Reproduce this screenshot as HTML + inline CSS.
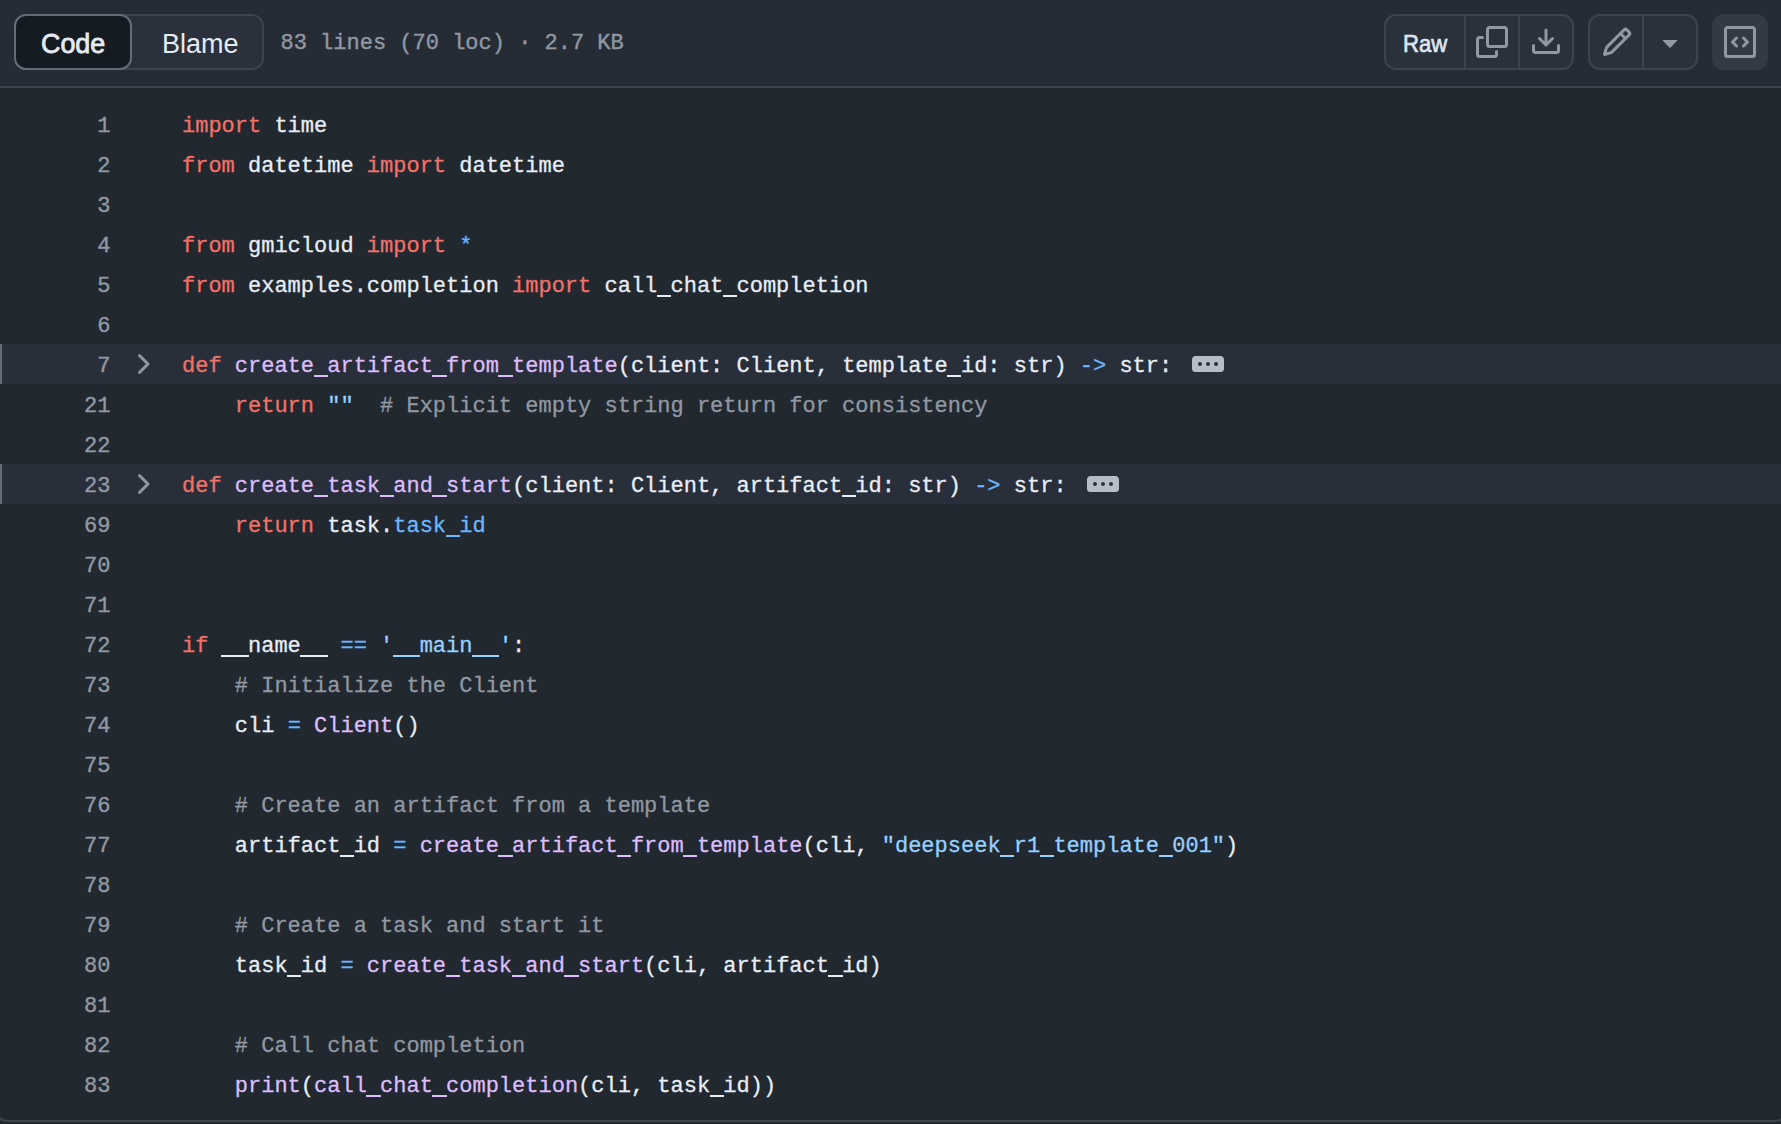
<!DOCTYPE html>
<html lang="en">
<head>
<meta charset="utf-8">
<title>Code view</title>
<style>
*{box-sizing:border-box;margin:0;padding:0}
html,body{width:1781px;height:1124px;overflow:hidden;background:#212830}
body{position:relative;font-family:"Liberation Sans",sans-serif;color:#f0f6fc}
.frame{position:absolute;left:-5px;top:-30px;width:1792px;height:1152px;border:2px solid #3d444d;border-radius:12px;pointer-events:none}
.hdr{position:absolute;left:0;top:0;width:1781px;height:88px;background:#262c36;border-bottom:2px solid #3d444d}
.seg{position:absolute;left:14px;top:14px;width:250px;height:56px;border:2px solid #3d444d;border-radius:12px;background:#2a313c}
.seg .on{position:absolute;left:-2px;top:-2px;width:118px;height:56px;border:2px solid #656c76;border-radius:12px;background:#151b23}
.seg span{position:absolute;top:0px;height:56px;line-height:56px;font-size:28px;color:#e6ebf2;white-space:nowrap;transform-origin:0 50%}
.seg .t1{left:25px;font-weight:normal;-webkit-text-stroke:.8px;transform:scaleX(.96)}
.seg .t2{left:146px;font-size:27px}
.info{position:absolute;left:280.5px;top:24px;-webkit-text-stroke:.4px #9198a1;height:40px;line-height:40px;font-family:"Liberation Mono",monospace;font-size:22px;color:#9198a1;white-space:pre}
.grp{position:absolute;top:14px;height:56px;border:2px solid #3d444d;border-radius:12px;background:#2a313c}
.grp i{position:absolute;top:0;width:2px;height:52px;background:#3d444d}
.grp svg,.sq svg{position:absolute;width:32px;height:32px;fill:#9198a1}
.raw{position:absolute;left:17px;top:-.5px;height:56px;line-height:56px;font-size:24px;font-weight:normal;-webkit-text-stroke:.7px;color:#dfe4ec;transform:scaleX(.92);transform-origin:0 50%}
.sq{position:absolute;left:1712px;top:14px;width:56px;height:56px;border-radius:12px;background:#323a45}
.code{position:absolute;left:0;top:104px;width:1781px;font-family:"Liberation Mono",monospace;font-size:22px}
.r{position:relative;height:40px;line-height:40px;white-space:pre}
.r.h{background:#292f3a;box-shadow:inset 2px 0 0 #656c76}
.n{position:absolute;left:0;top:3px;-webkit-text-stroke:.4px;width:110.5px;text-align:right;color:#9198a1}
.c{position:absolute;left:182px;top:3px;-webkit-text-stroke:.3px;color:#e8edf4}
.k{color:#f47067}.b{color:#6cb6ff}.s{color:#96d0ff}.p{color:#dcbdfb}.m{color:#9198a1}
u{position:relative;text-decoration:none;-webkit-text-fill-color:transparent;-webkit-text-stroke:0}
u::after{content:"";position:absolute;left:-.5px;right:-.5px;top:21px;height:2px;background:currentColor}
.chev{position:absolute;left:126px;top:4px;width:32px;height:32px;fill:#9198a1}
.el{display:inline-block;vertical-align:top;width:32px;height:32px;margin:1px 0 0 20px;fill:#b7bdc8}
</style>
</head>
<body>
<div class="hdr">
  <div class="seg"><div class="on"></div><span class="t1">Code</span><span class="t2">Blame</span></div>
  <div class="info">83 lines (70 loc) · 2.7 KB</div>
  <div class="grp" style="left:1384px;width:190px">
    <span class="raw">Raw</span>
    <i style="left:78px"></i><i style="left:132px"></i>
    <svg style="left:90px;top:10px" viewBox="0 0 16 16"><path d="M0 6.75C0 5.784.784 5 1.75 5h1.5a.75.75 0 0 1 0 1.5h-1.5a.25.25 0 0 0-.25.25v7.5c0 .138.112.25.25.25h7.5a.25.25 0 0 0 .25-.25v-1.5a.75.75 0 0 1 1.5 0v1.5A1.75 1.75 0 0 1 9.25 16h-7.5A1.75 1.75 0 0 1 0 14.25Z"/><path d="M5 1.75C5 .784 5.784 0 6.75 0h7.5C15.216 0 16 .784 16 1.75v7.5A1.75 1.75 0 0 1 14.25 11h-7.5A1.75 1.75 0 0 1 5 9.25Zm1.75-.25a.25.25 0 0 0-.25.25v7.5c0 .138.112.25.25.25h7.5a.25.25 0 0 0 .25-.25v-7.5a.25.25 0 0 0-.25-.25Z"/></svg>
    <svg style="left:144px;top:10px" viewBox="0 0 16 16"><path d="M2.75 14A1.75 1.75 0 0 1 1 12.25v-2.5a.75.75 0 0 1 1.5 0v2.5c0 .138.112.25.25.25h10.5a.25.25 0 0 0 .25-.25v-2.5a.75.75 0 0 1 1.5 0v2.5A1.75 1.75 0 0 1 13.25 14Z"/><path d="M7.25 7.689V2a.75.75 0 0 1 1.5 0v5.689l1.97-1.969a.749.749 0 1 1 1.06 1.06l-3.25 3.25a.749.749 0 0 1-1.06 0L4.22 6.78a.749.749 0 1 1 1.06-1.06l1.97 1.969Z"/></svg>
  </div>
  <div class="grp" style="left:1588px;width:110px">
    <i style="left:52px"></i>
    <svg style="left:11px;top:10px" viewBox="0 0 16 16"><path d="M11.013 1.427a1.75 1.75 0 0 1 2.474 0l1.086 1.086a1.75 1.75 0 0 1 0 2.474l-8.61 8.61c-.21.21-.47.364-.756.445l-3.251.93a.75.75 0 0 1-.927-.928l.929-3.25c.081-.286.235-.547.445-.758l8.61-8.61Zm.176 4.823L9.750 4.810l-6.286 6.287a.253.253 0 0 0-.064.108l-.558 1.953 1.953-.558a.253.253 0 0 0 .108-.064Zm1.238-3.763a.25.25 0 0 0-.354 0L10.811 3.750l1.439 1.440 1.263-1.263a.25.25 0 0 0 0-.354Z"/></svg>
    <svg style="left:64px;top:10px" viewBox="0 0 16 16"><path d="m4.427 7.427 3.396 3.396a.25.25 0 0 0 .354 0l3.396-3.396A.25.25 0 0 0 11.396 7H4.604a.25.25 0 0 0-.177.427Z"/></svg>
  </div>
  <div class="sq"><svg style="left:12px;top:12px" viewBox="0 0 16 16"><path d="M0 1.75C0 .784.784 0 1.750 0h12.500C15.216 0 16 .784 16 1.750v12.500A1.750 1.750 0 0 1 14.250 16H1.750A1.750 1.750 0 0 1 0 14.250Zm1.750-.250a.250.250 0 0 0-.250.250v12.500c0 .138.112.250.250.250h12.500a.250.250 0 0 0 .250-.250V1.750a.250.250 0 0 0-.250-.250Zm7.470 3.970a.750.750 0 0 1 1.060 0l2 2a.750.750 0 0 1 0 1.060l-2 2a.749.749 0 0 1-1.275-.326.749.749 0 0 1 .215-.734L10.690 8 9.220 6.530a.750.750 0 0 1 0-1.060ZM6.780 6.530 5.310 8l1.470 1.470a.749.749 0 0 1-.326 1.275.749.749 0 0 1-.734-.215l-2-2a.750.750 0 0 1 0-1.060l2-2a.751.751 0 0 1 1.042.018.751.751 0 0 1 .018 1.042Z"/></svg></div>
</div>
<div class="code" id="code">
<div class="r"><span class="n">1</span><span class="c"><span class="k">import</span> time</span></div>
<div class="r"><span class="n">2</span><span class="c"><span class="k">from</span> datetime <span class="k">import</span> datetime</span></div>
<div class="r"><span class="n">3</span></div>
<div class="r"><span class="n">4</span><span class="c"><span class="k">from</span> gmicloud <span class="k">import</span> <span class="b">*</span></span></div>
<div class="r"><span class="n">5</span><span class="c"><span class="k">from</span> examples.completion <span class="k">import</span> call<u>_</u>chat<u>_</u>completion</span></div>
<div class="r"><span class="n">6</span></div>
<div class="r h"><span class="n">7</span><svg class="chev" viewBox="0 0 16 16"><path d="M6.22 3.22a.75.75 0 0 1 1.06 0l4.25 4.25a.75.75 0 0 1 0 1.06l-4.25 4.25a.751.751 0 0 1-1.042-.018.751.751 0 0 1-.018-1.042L9.94 8 6.22 4.28a.75.75 0 0 1 0-1.06Z"/></svg><span class="c"><span class="k">def</span> <span class="p">create<u>_</u>artifact<u>_</u>from<u>_</u>template</span>(client: Client, template<u>_</u>id: str) <span class="b">-&gt;</span> str:<svg class="el" viewBox="0 0 16 16"><path d="M0 5.75C0 4.784.784 4 1.75 4h12.5c.966 0 1.75.784 1.75 1.75v4.5A1.75 1.75 0 0 1 14.25 12H1.75A1.75 1.75 0 0 1 0 10.25ZM12 7a1 1 0 1 0 0 2 1 1 0 0 0 0-2ZM7 8a1 1 0 1 0 2 0 1 1 0 0 0-2 0ZM4 7a1 1 0 1 0 0 2 1 1 0 0 0 0-2Z"/></svg></span></div>
<div class="r"><span class="n">21</span><span class="c">    <span class="k">return</span> <span class="s">""</span>  <span class="m"># Explicit empty string return for consistency</span></span></div>
<div class="r"><span class="n">22</span></div>
<div class="r h"><span class="n">23</span><svg class="chev" viewBox="0 0 16 16"><path d="M6.22 3.22a.75.75 0 0 1 1.06 0l4.25 4.25a.75.75 0 0 1 0 1.06l-4.25 4.25a.751.751 0 0 1-1.042-.018.751.751 0 0 1-.018-1.042L9.94 8 6.22 4.28a.75.75 0 0 1 0-1.06Z"/></svg><span class="c"><span class="k">def</span> <span class="p">create<u>_</u>task<u>_</u>and<u>_</u>start</span>(client: Client, artifact<u>_</u>id: str) <span class="b">-&gt;</span> str:<svg class="el" viewBox="0 0 16 16"><path d="M0 5.75C0 4.784.784 4 1.75 4h12.5c.966 0 1.75.784 1.75 1.75v4.5A1.75 1.75 0 0 1 14.25 12H1.75A1.75 1.75 0 0 1 0 10.25ZM12 7a1 1 0 1 0 0 2 1 1 0 0 0 0-2ZM7 8a1 1 0 1 0 2 0 1 1 0 0 0-2 0ZM4 7a1 1 0 1 0 0 2 1 1 0 0 0 0-2Z"/></svg></span></div>
<div class="r"><span class="n">69</span><span class="c">    <span class="k">return</span> task.<span class="b">task<u>_</u>id</span></span></div>
<div class="r"><span class="n">70</span></div>
<div class="r"><span class="n">71</span></div>
<div class="r"><span class="n">72</span><span class="c"><span class="k">if</span> <u>_</u><u>_</u>name<u>_</u><u>_</u> <span class="b">==</span> <span class="s">'<u>_</u><u>_</u>main<u>_</u><u>_</u>'</span>:</span></div>
<div class="r"><span class="n">73</span><span class="c">    <span class="m"># Initialize the Client</span></span></div>
<div class="r"><span class="n">74</span><span class="c">    cli <span class="b">=</span> <span class="p">Client</span>()</span></div>
<div class="r"><span class="n">75</span></div>
<div class="r"><span class="n">76</span><span class="c">    <span class="m"># Create an artifact from a template</span></span></div>
<div class="r"><span class="n">77</span><span class="c">    artifact<u>_</u>id <span class="b">=</span> <span class="p">create<u>_</u>artifact<u>_</u>from<u>_</u>template</span>(cli, <span class="s">"deepseek<u>_</u>r1<u>_</u>template<u>_</u>001"</span>)</span></div>
<div class="r"><span class="n">78</span></div>
<div class="r"><span class="n">79</span><span class="c">    <span class="m"># Create a task and start it</span></span></div>
<div class="r"><span class="n">80</span><span class="c">    task<u>_</u>id <span class="b">=</span> <span class="p">create<u>_</u>task<u>_</u>and<u>_</u>start</span>(cli, artifact<u>_</u>id)</span></div>
<div class="r"><span class="n">81</span></div>
<div class="r"><span class="n">82</span><span class="c">    <span class="m"># Call chat completion</span></span></div>
<div class="r"><span class="n">83</span><span class="c">    <span class="p">print</span>(<span class="p">call<u>_</u>chat<u>_</u>completion</span>(cli, task<u>_</u>id))</span></div>
</div>
<div class="frame"></div>
</body>
</html>
